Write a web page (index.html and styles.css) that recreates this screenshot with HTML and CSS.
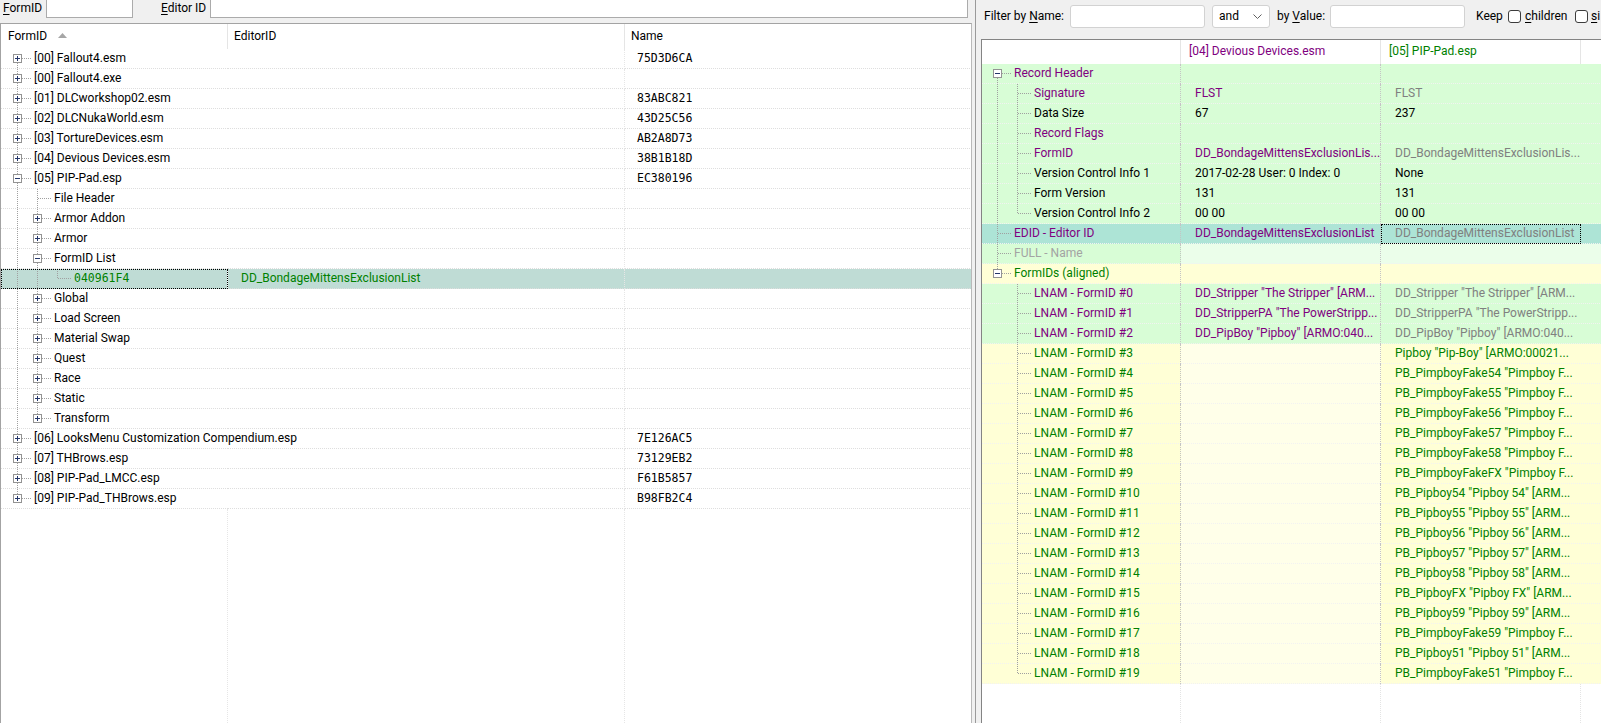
FILE: index.html
```html
<!DOCTYPE html>
<html>
<head>
<meta charset="utf-8">
<link rel="stylesheet" href="styles.css">
</head>
<body>
<div class="app">
  <div class="left">
    <div class="topbar">
      <span class="lbl lbl-fid"><u>F</u>ormID</span>
      <span class="in in-fid"></span>
      <span class="lbl lbl-eid"><u>E</u>ditor ID</span>
      <span class="in in-eid"></span>
    </div>
    <div class="list">
      <div class="lhead">
        <div class="lh lh1">FormID <svg class="sort" width="9" height="5" viewBox="0 0 9 5"><path d="M0 5L4.5 0L9 5Z" fill="#a6a6a6"/></svg></div>
        <div class="lh lh2">EditorID</div>
        <div class="lh lh3">Name</div>
      </div>

      <div class="lrow"><div class="c lc1"><span class="nd fst"><svg class="bx" width="9" height="9" viewBox="0 0 9 9"><rect x=".5" y=".5" width="8" height="8" fill="#fff" stroke="#939393"/><path d="M2 4.5h5M4.5 2v5" stroke="#24366a"/></svg></span><span class="t">[00] Fallout4.esm</span></div><div class="c lc2"></div><div class="c lc3 mono">75D3D6CA</div></div>
      <div class="lrow"><div class="c lc1"><span class="nd tee"><svg class="bx" width="9" height="9" viewBox="0 0 9 9"><rect x=".5" y=".5" width="8" height="8" fill="#fff" stroke="#939393"/><path d="M2 4.5h5M4.5 2v5" stroke="#24366a"/></svg></span><span class="t">[00] Fallout4.exe</span></div><div class="c lc2"></div><div class="c lc3 mono"></div></div>
      <div class="lrow"><div class="c lc1"><span class="nd tee"><svg class="bx" width="9" height="9" viewBox="0 0 9 9"><rect x=".5" y=".5" width="8" height="8" fill="#fff" stroke="#939393"/><path d="M2 4.5h5M4.5 2v5" stroke="#24366a"/></svg></span><span class="t">[01] DLCworkshop02.esm</span></div><div class="c lc2"></div><div class="c lc3 mono">83ABC821</div></div>
      <div class="lrow"><div class="c lc1"><span class="nd tee"><svg class="bx" width="9" height="9" viewBox="0 0 9 9"><rect x=".5" y=".5" width="8" height="8" fill="#fff" stroke="#939393"/><path d="M2 4.5h5M4.5 2v5" stroke="#24366a"/></svg></span><span class="t">[02] DLCNukaWorld.esm</span></div><div class="c lc2"></div><div class="c lc3 mono">43D25C56</div></div>
      <div class="lrow"><div class="c lc1"><span class="nd tee"><svg class="bx" width="9" height="9" viewBox="0 0 9 9"><rect x=".5" y=".5" width="8" height="8" fill="#fff" stroke="#939393"/><path d="M2 4.5h5M4.5 2v5" stroke="#24366a"/></svg></span><span class="t">[03] TortureDevices.esm</span></div><div class="c lc2"></div><div class="c lc3 mono">AB2A8D73</div></div>
      <div class="lrow"><div class="c lc1"><span class="nd tee"><svg class="bx" width="9" height="9" viewBox="0 0 9 9"><rect x=".5" y=".5" width="8" height="8" fill="#fff" stroke="#939393"/><path d="M2 4.5h5M4.5 2v5" stroke="#24366a"/></svg></span><span class="t">[04] Devious Devices.esm</span></div><div class="c lc2"></div><div class="c lc3 mono">38B1B18D</div></div>
      <div class="lrow"><div class="c lc1"><span class="nd tee"><svg class="bx" width="9" height="9" viewBox="0 0 9 9"><rect x=".5" y=".5" width="8" height="8" fill="#fff" stroke="#939393"/><path d="M2 4.5h5" stroke="#24366a"/></svg></span><span class="t">[05] PIP-Pad.esp</span></div><div class="c lc2"></div><div class="c lc3 mono">EC380196</div></div>
      <div class="lrow"><div class="c lc1"><span class="p"></span><span class="nd tee"></span><span class="t">File Header</span></div><div class="c lc2"></div><div class="c lc3"></div></div>
      <div class="lrow"><div class="c lc1"><span class="p"></span><span class="nd tee"><svg class="bx" width="9" height="9" viewBox="0 0 9 9"><rect x=".5" y=".5" width="8" height="8" fill="#fff" stroke="#939393"/><path d="M2 4.5h5M4.5 2v5" stroke="#24366a"/></svg></span><span class="t">Armor Addon</span></div><div class="c lc2"></div><div class="c lc3"></div></div>
      <div class="lrow"><div class="c lc1"><span class="p"></span><span class="nd tee"><svg class="bx" width="9" height="9" viewBox="0 0 9 9"><rect x=".5" y=".5" width="8" height="8" fill="#fff" stroke="#939393"/><path d="M2 4.5h5M4.5 2v5" stroke="#24366a"/></svg></span><span class="t">Armor</span></div><div class="c lc2"></div><div class="c lc3"></div></div>
      <div class="lrow"><div class="c lc1"><span class="p"></span><span class="nd tee"><svg class="bx" width="9" height="9" viewBox="0 0 9 9"><rect x=".5" y=".5" width="8" height="8" fill="#fff" stroke="#939393"/><path d="M2 4.5h5" stroke="#24366a"/></svg></span><span class="t">FormID List</span></div><div class="c lc2"></div><div class="c lc3"></div></div>
      <div class="lrow sel"><div class="c lc1 focus"><span class="p"></span><span class="p"></span><span class="nd ell"></span><span class="t mono green">040961F4</span></div><div class="c lc2 green">DD_BondageMittensExclusionList</div><div class="c lc3"></div></div>
      <div class="lrow"><div class="c lc1"><span class="p"></span><span class="nd tee"><svg class="bx" width="9" height="9" viewBox="0 0 9 9"><rect x=".5" y=".5" width="8" height="8" fill="#fff" stroke="#939393"/><path d="M2 4.5h5M4.5 2v5" stroke="#24366a"/></svg></span><span class="t">Global</span></div><div class="c lc2"></div><div class="c lc3"></div></div>
      <div class="lrow"><div class="c lc1"><span class="p"></span><span class="nd tee"><svg class="bx" width="9" height="9" viewBox="0 0 9 9"><rect x=".5" y=".5" width="8" height="8" fill="#fff" stroke="#939393"/><path d="M2 4.5h5M4.5 2v5" stroke="#24366a"/></svg></span><span class="t">Load Screen</span></div><div class="c lc2"></div><div class="c lc3"></div></div>
      <div class="lrow"><div class="c lc1"><span class="p"></span><span class="nd tee"><svg class="bx" width="9" height="9" viewBox="0 0 9 9"><rect x=".5" y=".5" width="8" height="8" fill="#fff" stroke="#939393"/><path d="M2 4.5h5M4.5 2v5" stroke="#24366a"/></svg></span><span class="t">Material Swap</span></div><div class="c lc2"></div><div class="c lc3"></div></div>
      <div class="lrow"><div class="c lc1"><span class="p"></span><span class="nd tee"><svg class="bx" width="9" height="9" viewBox="0 0 9 9"><rect x=".5" y=".5" width="8" height="8" fill="#fff" stroke="#939393"/><path d="M2 4.5h5M4.5 2v5" stroke="#24366a"/></svg></span><span class="t">Quest</span></div><div class="c lc2"></div><div class="c lc3"></div></div>
      <div class="lrow"><div class="c lc1"><span class="p"></span><span class="nd tee"><svg class="bx" width="9" height="9" viewBox="0 0 9 9"><rect x=".5" y=".5" width="8" height="8" fill="#fff" stroke="#939393"/><path d="M2 4.5h5M4.5 2v5" stroke="#24366a"/></svg></span><span class="t">Race</span></div><div class="c lc2"></div><div class="c lc3"></div></div>
      <div class="lrow"><div class="c lc1"><span class="p"></span><span class="nd tee"><svg class="bx" width="9" height="9" viewBox="0 0 9 9"><rect x=".5" y=".5" width="8" height="8" fill="#fff" stroke="#939393"/><path d="M2 4.5h5M4.5 2v5" stroke="#24366a"/></svg></span><span class="t">Static</span></div><div class="c lc2"></div><div class="c lc3"></div></div>
      <div class="lrow"><div class="c lc1"><span class="p"></span><span class="nd ell"><svg class="bx" width="9" height="9" viewBox="0 0 9 9"><rect x=".5" y=".5" width="8" height="8" fill="#fff" stroke="#939393"/><path d="M2 4.5h5M4.5 2v5" stroke="#24366a"/></svg></span><span class="t">Transform</span></div><div class="c lc2"></div><div class="c lc3"></div></div>
      <div class="lrow"><div class="c lc1"><span class="nd tee"><svg class="bx" width="9" height="9" viewBox="0 0 9 9"><rect x=".5" y=".5" width="8" height="8" fill="#fff" stroke="#939393"/><path d="M2 4.5h5M4.5 2v5" stroke="#24366a"/></svg></span><span class="t">[06] LooksMenu Customization Compendium.esp</span></div><div class="c lc2"></div><div class="c lc3 mono">7E126AC5</div></div>
      <div class="lrow"><div class="c lc1"><span class="nd tee"><svg class="bx" width="9" height="9" viewBox="0 0 9 9"><rect x=".5" y=".5" width="8" height="8" fill="#fff" stroke="#939393"/><path d="M2 4.5h5M4.5 2v5" stroke="#24366a"/></svg></span><span class="t">[07] THBrows.esp</span></div><div class="c lc2"></div><div class="c lc3 mono">73129EB2</div></div>
      <div class="lrow"><div class="c lc1"><span class="nd tee"><svg class="bx" width="9" height="9" viewBox="0 0 9 9"><rect x=".5" y=".5" width="8" height="8" fill="#fff" stroke="#939393"/><path d="M2 4.5h5M4.5 2v5" stroke="#24366a"/></svg></span><span class="t">[08] PIP-Pad_LMCC.esp</span></div><div class="c lc2"></div><div class="c lc3 mono">F61B5857</div></div>
      <div class="lrow"><div class="c lc1"><span class="nd ell"><svg class="bx" width="9" height="9" viewBox="0 0 9 9"><rect x=".5" y=".5" width="8" height="8" fill="#fff" stroke="#939393"/><path d="M2 4.5h5M4.5 2v5" stroke="#24366a"/></svg></span><span class="t">[09] PIP-Pad_THBrows.esp</span></div><div class="c lc2"></div><div class="c lc3 mono">B98FB2C4</div></div>

      <div class="lfill"><div class="lf1"></div><div class="lf2"></div><div class="lf3"></div></div>
    </div>
  </div>
  <div class="split"></div>
  <div class="right">
    <div class="filter">
      <span class="flbl f-name">Filter by <u>N</u>ame:</span>
      <span class="fin fin-name"></span>
      <span class="fsel">and <svg width="9" height="5" viewBox="0 0 9 5"><path d="M.5 .5L4.5 4.5L8.5 .5" fill="none" stroke="#606060"/></svg></span>
      <span class="flbl f-val">by <u>V</u>alue:</span>
      <span class="fin fin-val"></span>
      <span class="flbl f-keep">Keep</span>
      <span class="chk"></span>
      <span class="flbl f-ch"><u>c</u>hildren</span>
      <span class="chk"></span>
      <span class="flbl f-si"><u>s</u>i</span>
    </div>
    <div class="tree">
      <div class="rhead">
        <div class="rh rh1"></div>
        <div class="rh rh2 purple">[04] Devious Devices.esm</div>
        <div class="rh rh3 green">[05] PIP-Pad.esp</div>
        <div class="rh rh4"></div>
      </div>

      <div class="rrow gr"><div class="c rc1"><span class="nd fst"><svg class="bx" width="9" height="9" viewBox="0 0 9 9"><rect x=".5" y=".5" width="8" height="8" fill="#fff" stroke="#939393"/><path d="M2 4.5h5" stroke="#24366a"/></svg></span><span class="t purple">Record Header</span></div><div class="c rc2"></div><div class="c rc3"></div><div class="c rc4"></div></div>
      <div class="rrow gr"><div class="c rc1"><span class="p"></span><span class="nd tee"></span><span class="t purple">Signature</span></div><div class="c rc2 purple">FLST</div><div class="c rc3 gray">FLST</div><div class="c rc4"></div></div>
      <div class="rrow gr"><div class="c rc1"><span class="p"></span><span class="nd tee"></span><span class="t">Data Size</span></div><div class="c rc2">67</div><div class="c rc3">237</div><div class="c rc4"></div></div>
      <div class="rrow gr"><div class="c rc1"><span class="p"></span><span class="nd tee"></span><span class="t purple">Record Flags</span></div><div class="c rc2"></div><div class="c rc3"></div><div class="c rc4"></div></div>
      <div class="rrow gr"><div class="c rc1"><span class="p"></span><span class="nd tee"></span><span class="t purple">FormID</span></div><div class="c rc2 purple">DD_BondageMittensExclusionLis...</div><div class="c rc3 gray">DD_BondageMittensExclusionLis...</div><div class="c rc4"></div></div>
      <div class="rrow gr"><div class="c rc1"><span class="p"></span><span class="nd tee"></span><span class="t">Version Control Info 1</span></div><div class="c rc2">2017-02-28 User: 0 Index: 0</div><div class="c rc3">None</div><div class="c rc4"></div></div>
      <div class="rrow gr"><div class="c rc1"><span class="p"></span><span class="nd tee"></span><span class="t">Form Version</span></div><div class="c rc2">131</div><div class="c rc3">131</div><div class="c rc4"></div></div>
      <div class="rrow gr"><div class="c rc1"><span class="p"></span><span class="nd ell"></span><span class="t">Version Control Info 2</span></div><div class="c rc2">00 00</div><div class="c rc3">00 00</div><div class="c rc4"></div></div>
      <div class="rrow sl"><div class="c rc1"><span class="nd tee"></span><span class="t purple">EDID - Editor ID</span></div><div class="c rc2 purple">DD_BondageMittensExclusionList</div><div class="c rc3 gray focus">DD_BondageMittensExclusionList</div><div class="c rc4"></div></div>
      <div class="rrow lg"><div class="c rc1"><span class="nd tee"></span><span class="t lgray">FULL - Name</span></div><div class="c rc2"></div><div class="c rc3"></div><div class="c rc4"></div></div>
      <div class="rrow yl"><div class="c rc1"><span class="nd ell"><svg class="bx" width="9" height="9" viewBox="0 0 9 9"><rect x=".5" y=".5" width="8" height="8" fill="#fff" stroke="#939393"/><path d="M2 4.5h5" stroke="#24366a"/></svg></span><span class="t green">FormIDs (aligned)</span></div><div class="c rc2"></div><div class="c rc3"></div><div class="c rc4"></div></div>
      <div class="rrow gr"><div class="c rc1"><span class="p n"></span><span class="nd tee"></span><span class="t purple">LNAM - FormID #0</span></div><div class="c rc2 purple">DD_Stripper "The Stripper" [ARM...</div><div class="c rc3 gray">DD_Stripper "The Stripper" [ARM...</div><div class="c rc4"></div></div>
      <div class="rrow gr"><div class="c rc1"><span class="p n"></span><span class="nd tee"></span><span class="t purple">LNAM - FormID #1</span></div><div class="c rc2 purple">DD_StripperPA "The PowerStripp...</div><div class="c rc3 gray">DD_StripperPA "The PowerStripp...</div><div class="c rc4"></div></div>
      <div class="rrow gr"><div class="c rc1"><span class="p n"></span><span class="nd tee"></span><span class="t purple">LNAM - FormID #2</span></div><div class="c rc2 purple">DD_PipBoy "Pipboy" [ARMO:040...</div><div class="c rc3 gray">DD_PipBoy "Pipboy" [ARMO:040...</div><div class="c rc4"></div></div>
      <div class="rrow ylw"><div class="c rc1"><span class="p n"></span><span class="nd tee"></span><span class="t green">LNAM - FormID #3</span></div><div class="c rc2"></div><div class="c rc3 green">Pipboy "Pip-Boy" [ARMO:00021...</div><div class="c rc4"></div></div>
      <div class="rrow ylw"><div class="c rc1"><span class="p n"></span><span class="nd tee"></span><span class="t green">LNAM - FormID #4</span></div><div class="c rc2"></div><div class="c rc3 green">PB_PimpboyFake54 "Pimpboy F...</div><div class="c rc4"></div></div>
      <div class="rrow ylw"><div class="c rc1"><span class="p n"></span><span class="nd tee"></span><span class="t green">LNAM - FormID #5</span></div><div class="c rc2"></div><div class="c rc3 green">PB_PimpboyFake55 "Pimpboy F...</div><div class="c rc4"></div></div>
      <div class="rrow ylw"><div class="c rc1"><span class="p n"></span><span class="nd tee"></span><span class="t green">LNAM - FormID #6</span></div><div class="c rc2"></div><div class="c rc3 green">PB_PimpboyFake56 "Pimpboy F...</div><div class="c rc4"></div></div>
      <div class="rrow ylw"><div class="c rc1"><span class="p n"></span><span class="nd tee"></span><span class="t green">LNAM - FormID #7</span></div><div class="c rc2"></div><div class="c rc3 green">PB_PimpboyFake57 "Pimpboy F...</div><div class="c rc4"></div></div>
      <div class="rrow ylw"><div class="c rc1"><span class="p n"></span><span class="nd tee"></span><span class="t green">LNAM - FormID #8</span></div><div class="c rc2"></div><div class="c rc3 green">PB_PimpboyFake58 "Pimpboy F...</div><div class="c rc4"></div></div>
      <div class="rrow ylw"><div class="c rc1"><span class="p n"></span><span class="nd tee"></span><span class="t green">LNAM - FormID #9</span></div><div class="c rc2"></div><div class="c rc3 green">PB_PimpboyFakeFX "Pimpboy F...</div><div class="c rc4"></div></div>
      <div class="rrow ylw"><div class="c rc1"><span class="p n"></span><span class="nd tee"></span><span class="t green">LNAM - FormID #10</span></div><div class="c rc2"></div><div class="c rc3 green">PB_Pipboy54 "Pipboy 54" [ARM...</div><div class="c rc4"></div></div>
      <div class="rrow ylw"><div class="c rc1"><span class="p n"></span><span class="nd tee"></span><span class="t green">LNAM - FormID #11</span></div><div class="c rc2"></div><div class="c rc3 green">PB_Pipboy55 "Pipboy 55" [ARM...</div><div class="c rc4"></div></div>
      <div class="rrow ylw"><div class="c rc1"><span class="p n"></span><span class="nd tee"></span><span class="t green">LNAM - FormID #12</span></div><div class="c rc2"></div><div class="c rc3 green">PB_Pipboy56 "Pipboy 56" [ARM...</div><div class="c rc4"></div></div>
      <div class="rrow ylw"><div class="c rc1"><span class="p n"></span><span class="nd tee"></span><span class="t green">LNAM - FormID #13</span></div><div class="c rc2"></div><div class="c rc3 green">PB_Pipboy57 "Pipboy 57" [ARM...</div><div class="c rc4"></div></div>
      <div class="rrow ylw"><div class="c rc1"><span class="p n"></span><span class="nd tee"></span><span class="t green">LNAM - FormID #14</span></div><div class="c rc2"></div><div class="c rc3 green">PB_Pipboy58 "Pipboy 58" [ARM...</div><div class="c rc4"></div></div>
      <div class="rrow ylw"><div class="c rc1"><span class="p n"></span><span class="nd tee"></span><span class="t green">LNAM - FormID #15</span></div><div class="c rc2"></div><div class="c rc3 green">PB_PipboyFX "Pipboy FX" [ARM...</div><div class="c rc4"></div></div>
      <div class="rrow ylw"><div class="c rc1"><span class="p n"></span><span class="nd tee"></span><span class="t green">LNAM - FormID #16</span></div><div class="c rc2"></div><div class="c rc3 green">PB_Pipboy59 "Pipboy 59" [ARM...</div><div class="c rc4"></div></div>
      <div class="rrow ylw"><div class="c rc1"><span class="p n"></span><span class="nd tee"></span><span class="t green">LNAM - FormID #17</span></div><div class="c rc2"></div><div class="c rc3 green">PB_PimpboyFake59 "Pimpboy F...</div><div class="c rc4"></div></div>
      <div class="rrow ylw"><div class="c rc1"><span class="p n"></span><span class="nd tee"></span><span class="t green">LNAM - FormID #18</span></div><div class="c rc2"></div><div class="c rc3 green">PB_Pipboy51 "Pipboy 51" [ARM...</div><div class="c rc4"></div></div>
      <div class="rrow ylw"><div class="c rc1"><span class="p n"></span><span class="nd ell"></span><span class="t green">LNAM - FormID #19</span></div><div class="c rc2"></div><div class="c rc3 green">PB_PimpboyFake51 "Pimpboy F...</div><div class="c rc4"></div></div>

      <div class="rfill"><div class="rf1"></div><div class="rf2"></div><div class="rf3"></div><div class="rf4"></div></div>
    </div>
  </div>
</div>
</body>
</html>
```

FILE: styles.css
```css
* { box-sizing: border-box; }
html, body { margin: 0; padding: 0; }
body {
  width: 1601px;
  height: 723px;
  overflow: hidden;
  background: #f0f0f0;
  font-family: Roboto, "Noto Sans", sans-serif;
  font-size: 12px;
  color: #000;
}
u { text-decoration: underline; text-underline-offset: 2px; }

.app { display: flex; height: 723px; }

/* ---------- left pane ---------- */
.left { width: 975px; flex: none; display: flex; flex-direction: column; }
.topbar { height: 23px; flex: none; display: flex; align-items: flex-start; }
.lbl { height: 18px; line-height: 16px; white-space: nowrap; }
.lbl-fid { width: 46px; padding-left: 3px; }
.lbl-eid { width: 77px; padding-left: 28px; }
.in { height: 18px; background: #fff; border: 1px solid #ababab; border-top: 0; }
.in-fid { width: 87px; }
.in-eid { width: 758px; }

.list {
  flex: 1;
  margin-right: 3px;
  background: #fff;
  border-top: 1px solid #a3a3a3;
  border-left: 1px solid #a3a3a3;
  border-right: 1px solid #b9b9b9;
  display: flex;
  flex-direction: column;
  min-height: 0;
}
.lhead { display: flex; height: 25px; flex: none; }
.lh { height: 25px; line-height: 24px; white-space: nowrap; border-right: 1px solid #e5e5e5; }
.lh1 { width: 227px; padding-left: 7px; }
.lh2 { width: 397px; padding-left: 6px; }
.lh3 { flex: 1; padding-left: 6px; border-right: 0; }
.sort { margin-left: 8px; vertical-align: 2px; }

.c {
  height: 20px;
  line-height: 19px;
  white-space: nowrap;
  overflow: hidden;
  background-image: repeating-linear-gradient(90deg, #dedede 0 1px, transparent 1px 2px);
  background-size: 100% 1px;
  background-position: left bottom;
  background-repeat: no-repeat;
}
.lrow { display: flex; flex: none; height: 20px; }
.lc1 { width: 227px; padding-left: 6px; display: flex; overflow: visible; }
.lc2 { width: 397px; padding-left: 13px; border-right: 1px dotted #e6e6e6; }
.lc3 { flex: 1; padding-left: 12px; }
.lrow.sel .c { background-color: #bfdcd5; }
.lrow.sel .lc1 { border-right: 1px solid #fff; }
.focus { outline: 1px dotted #000; outline-offset: -1px; }

.mono { font-family: "DejaVu Sans Mono", "Liberation Mono", monospace; font-size: 11.5px; }

.lfill { flex: 1; display: flex; }
.lf1 { width: 227px; border-right: 1px dotted #e6e6e6; }
.lf2 { width: 397px; border-right: 1px dotted #e6e6e6; }
.lf3 { flex: 1; }

/* tree guides */
.p, .nd { flex: none; height: 20px; display: flex; align-items: flex-start; }
.p {
  width: 20px;
  background: repeating-linear-gradient(180deg, #a0a0a0 0 1px, transparent 1px 2px) 10px 0 / 1px 20px no-repeat;
}
.p.n { background: none; }
.nd { width: 24px; }
.nd.tee {
  background:
    repeating-linear-gradient(180deg, #a0a0a0 0 1px, transparent 1px 2px) 10px 0 / 1px 20px no-repeat,
    repeating-linear-gradient(90deg, #a0a0a0 0 1px, transparent 1px 2px) 11px 9px / 13px 1px no-repeat;
}
.nd.ell {
  background:
    repeating-linear-gradient(180deg, #a0a0a0 0 1px, transparent 1px 2px) 10px 0 / 1px 10px no-repeat,
    repeating-linear-gradient(90deg, #a0a0a0 0 1px, transparent 1px 2px) 11px 9px / 13px 1px no-repeat;
}
.nd.fst {
  background:
    repeating-linear-gradient(180deg, #a0a0a0 0 1px, transparent 1px 2px) 10px 10px / 1px 10px no-repeat,
    repeating-linear-gradient(90deg, #a0a0a0 0 1px, transparent 1px 2px) 11px 9px / 13px 1px no-repeat;
}
.bx { display: block; margin: 5px 0 0 6px; }
.t { margin-left: 3px; white-space: nowrap; }

.purple { color: #800080; }
.green { color: #008000; }
.gray { color: #808080; }
.lgray { color: #a3a3a3; }

/* ---------- splitter ---------- */
.split { width: 1px; flex: none; background: #9a9a9a; }

/* ---------- right pane ---------- */
.right { flex: 1; min-width: 0; display: flex; flex-direction: column; padding-left: 5px; }
.filter { height: 39px; flex: none; display: flex; align-items: flex-start; padding: 5px 0 0 3px; white-space: nowrap; overflow: hidden; }
.flbl { height: 23px; line-height: 23px; flex: none; }
.f-name { width: 86px; }
.fin { height: 23px; width: 135px; flex: none; background: #fff; border: 1px solid #d2d2d2; border-radius: 3px; }
.fsel {
  width: 58px; height: 23px; flex: none; margin-left: 7px;
  background: #fff; border: 1px solid #d2d2d2; border-radius: 3px;
  display: flex; align-items: center; justify-content: space-between;
  padding: 0 7px 0 6px; line-height: 21px;
}
.f-val { width: 53px; margin-left: 7px; }
.f-keep { width: 32px; margin-left: 11px; }
.chk { width: 13px; height: 13px; flex: none; margin-top: 5px; background: #fff; border: 1px solid #3c3c3c; border-radius: 3px; }
.f-ch { width: 52px; margin-left: 2px; padding-left: 2px; }
.f-si { margin-left: 1px; padding-left: 2px; }

.tree {
  flex: 1;
  min-height: 0;
  background: #fff;
  border-top: 1px solid #848484;
  border-left: 1px solid #848484;
  display: flex;
  flex-direction: column;
}
.rhead { display: flex; height: 24px; flex: none; }
.rh { height: 24px; line-height: 22px; white-space: nowrap; border-right: 1px solid #e5e5e5; padding-left: 8px; }
.rh1 { width: 199px; }
.rh2, .rh3 { width: 200px; }
.rh4 { flex: 1; border-right: 0; }

.rrow { display: flex; flex: none; height: 20px; }
.rc1 { width: 199px; padding-left: 5px; display: flex; border-right: 1px dotted #c4c4c4; }
.rc2 { width: 200px; padding-left: 14px; border-right: 1px dotted #c4c4c4; }
.rc3 { width: 200px; padding-left: 14px; }
.rc4 { flex: 1; }

.rrow .c { background-image: repeating-linear-gradient(90deg, #f2f2f2 0 1px, transparent 1px 2px); }
.rrow.gr .c { background-color: #d8fdd6; }
.rrow.sl .c { background-color: #ade4d6; }
.rrow.lg .c { background-color: #ebfeea; }
.rrow.lg .rc1 { background-color: #d8fdd6; }
.rrow.yl .c { background-color: #ffffd6; }
.rrow.ylw .c { background-color: #ffffd6; }
.rrow.ylw .rc2 { background-color: #ffffe9; }

.rfill { flex: 1; display: flex; }
.rf1 { width: 199px; border-right: 1px dotted #e4e4e4; }
.rf2 { width: 200px; border-right: 1px dotted #e4e4e4; }
.rf3 { width: 200px; border-right: 1px dotted #e4e4e4; }
.rf4 { flex: 1; }
```
